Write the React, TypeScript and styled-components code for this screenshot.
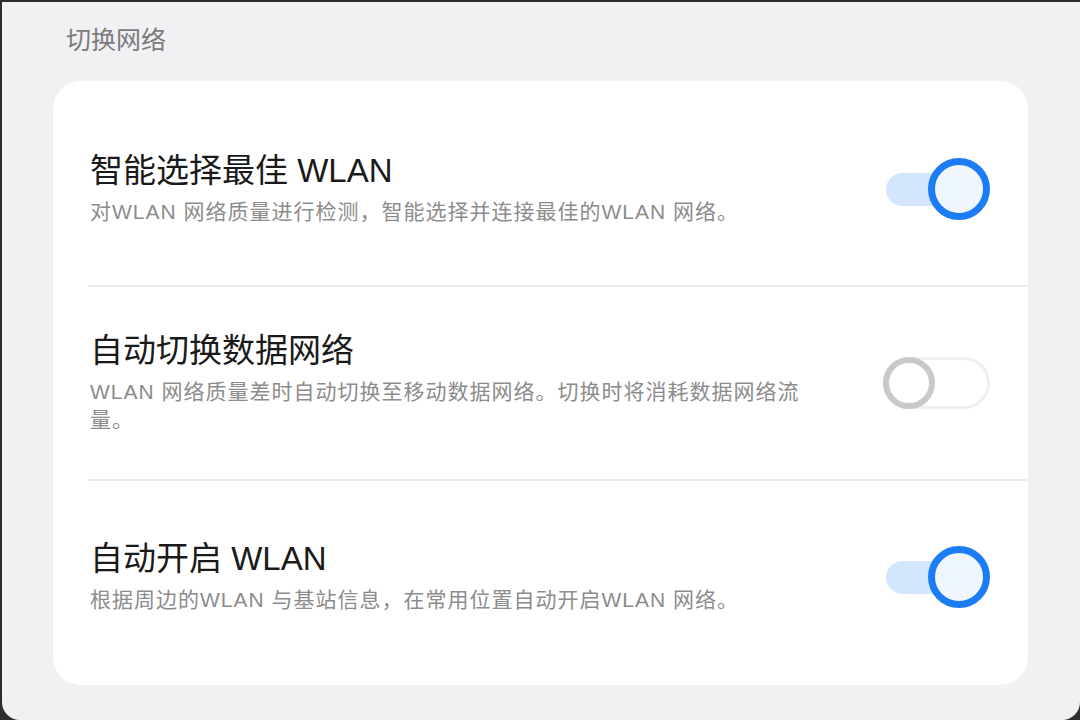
import styled, { createGlobalStyle } from 'styled-components';

const GlobalStyle = createGlobalStyle`
  html, body {
    margin: 0;
    padding: 0;
    background: #2e2e30;
  }
  body {
    font-family: "Liberation Sans", "Noto Sans CJK SC", sans-serif;
  }
`;

const Screen = styled.div`
  box-sizing: border-box;
  margin: 2px 0 0 2px;
  width: calc(100% - 2px);
  height: 718px;
  background: #f1f1f3;
  border-radius: 0 0 18px 18px;
  padding: 20px 0 0 51px;
  overflow: hidden;
`;

const SectionTitle = styled.h2`
  margin: 0 0 23px 13px;
  font-size: 25px;
  line-height: 36px;
  font-weight: 400;
  color: #7b7b7d;
`;

const Card = styled.div`
  width: 975px;
  background: #ffffff;
  border-radius: 28px;
  padding: 12px 0;
  box-sizing: border-box;
`;

const Row = styled.div`
  display: flex;
  align-items: center;
  min-height: 192px;
  padding: 0 38px 0 37px;
  box-sizing: border-box;
`;

const Divider = styled.div`
  height: 2px;
  margin-left: 35px;
  background: #ececec;
`;

const Texts = styled.div`
  flex: 1;
  display: flex;
  flex-direction: column;
`;

const Title = styled.div`
  margin-top: -3px;
  font-size: 33px;
  line-height: 44px;
  color: #1a1a1a;
`;

const Subtitle = styled.div`
  margin-top: 5px;
  max-width: 725px;
  font-size: 21px;
  line-height: 28px;
  letter-spacing: 1px;
  color: #8c8c8c;
`;

const SwitchBox = styled.div`
  position: relative;
  width: 107px;
  height: 62px;
  flex-shrink: 0;
  display: flex;
  align-items: center;
`;

const Track = styled.div<{ $on: boolean }>`
  box-sizing: border-box;
  margin-left: ${({ $on }) => ($on ? '3px' : '0')};
  width: ${({ $on }) => ($on ? '90px' : '107px')};
  height: ${({ $on }) => ($on ? '33px' : '52px')};
  border-radius: 26px;
  background: ${({ $on }) => ($on ? '#d4e6fd' : '#ffffff')};
  border: ${({ $on }) => ($on ? 'none' : '3px solid #efefef')};
`;

const Knob = styled.div<{ $on: boolean }>`
  position: absolute;
  top: 50%;
  box-sizing: border-box;
  transform: translateY(-50%);
  left: ${({ $on }) => ($on ? '45px' : '0')};
  width: ${({ $on }) => ($on ? '62px' : '52px')};
  height: ${({ $on }) => ($on ? '62px' : '52px')};
  border-radius: 50%;
  background: ${({ $on }) => ($on ? '#eff6fe' : '#ffffff')};
  border: ${({ $on }) => ($on ? '7px solid #1b7cf4' : '6px solid #c9c9c9')};
`;

function Switch({ on }: { on: boolean }) {
  return (
    <SwitchBox>
      <Track $on={on} />
      <Knob $on={on} />
    </SwitchBox>
  );
}

const settings = [
  {
    title: '智能选择最佳 WLAN',
    desc: '对WLAN 网络质量进行检测，智能选择并连接最佳的WLAN 网络。',
    on: true,
  },
  {
    title: '自动切换数据网络',
    desc: 'WLAN 网络质量差时自动切换至移动数据网络。切换时将消耗数据网络流量。',
    on: false,
  },
  {
    title: '自动开启 WLAN',
    desc: '根据周边的WLAN 与基站信息，在常用位置自动开启WLAN 网络。',
    on: true,
  },
];

export default function App() {
  return (
    <>
      <GlobalStyle />
      <Screen>
        <SectionTitle>切换网络</SectionTitle>
        <Card>
          {settings.map((s, i) => (
            <div key={s.title}>
              {i > 0 && <Divider />}
              <Row>
                <Texts>
                  <Title>{s.title}</Title>
                  <Subtitle>{s.desc}</Subtitle>
                </Texts>
                <Switch on={s.on} />
              </Row>
            </div>
          ))}
        </Card>
      </Screen>
    </>
  );
}
